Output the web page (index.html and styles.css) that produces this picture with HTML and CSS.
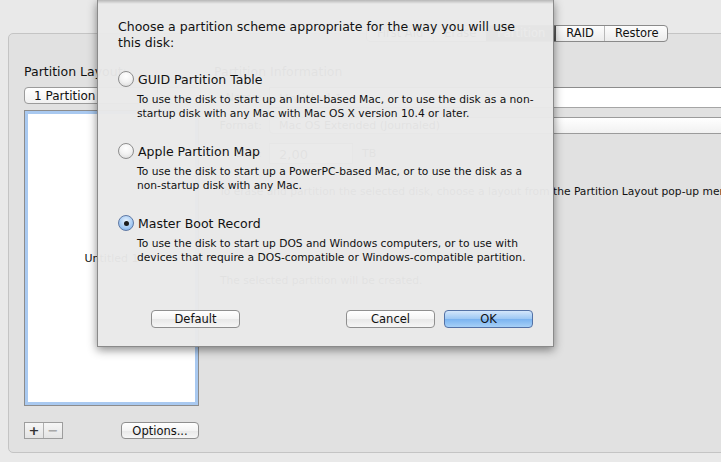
FILE: index.html
```html
<!DOCTYPE html>
<html lang="en">

<head>
  <meta charset="UTF-8" />
  <title>Disk Utility - Partition Options</title>
  <link rel="stylesheet" href="styles.css">
</head>

<body>

  <!-- window behind the sheet -->
  <div class="window">
    <div class="group">
      <div class="tabs">
        <span class="tab">First Aid</span>
        <span class="tab">Erase</span>
        <span class="tab selected">Partition</span>
        <span class="tab">RAID</span>
        <span class="tab">Restore</span>
      </div>

      <div class="layout-col">
        <div class="heading">Partition Layout:</div>
        <div class="popup">1 Partition</div>
        <div class="volume-list">
          <span class="volume-name">Untitled 1</span>
        </div>
        <div class="list-tools">
          <div class="plus-minus">
            <span class="pm">+</span>
            <span class="pm off">−</span>
          </div>
          <button class="btn options">Options...</button>
        </div>
      </div>

      <div class="info-col">
        <div class="heading">Partition Information</div>
        <div class="row">
          <span class="row-label">Name:</span>
          <span class="field wide">Untitled 1</span>
        </div>
        <div class="row">
          <span class="row-label">Format:</span>
          <span class="popup wide">Mac OS Extended (Journaled)</span>
        </div>
        <div class="row">
          <span class="row-label">Size:</span>
          <span class="field size">2,00</span>
          <span class="unit">TB</span>
        </div>
        <p class="hint">To erase and partition the selected disk, choose a layout from the Partition Layout pop-up menu, set options for each partition, and click Apply.</p>
        <p class="note">The selected partition will be created.</p>
      </div>
    </div>
  </div>

  <!-- options sheet -->
  <div class="sheet">
    <p class="intro">Choose a partition scheme appropriate for the way you will use<br>this disk:</p>

    <div class="scheme">
      <div class="scheme-title"><span class="radio"></span>GUID Partition Table</div>
      <p class="scheme-desc">To use the disk to start up an Intel-based Mac, or to use the disk as a non-<br>startup disk with any Mac with Mac OS X version 10.4 or later.</p>
    </div>

    <div class="scheme">
      <div class="scheme-title"><span class="radio"></span>Apple Partition Map</div>
      <p class="scheme-desc">To use the disk to start up a PowerPC-based Mac, or to use the disk as a<br>non-startup disk with any Mac.</p>
    </div>

    <div class="scheme">
      <div class="scheme-title"><span class="radio on"></span>Master Boot Record</div>
      <p class="scheme-desc">To use the disk to start up DOS and Windows computers, or to use with<br>devices that require a DOS-compatible or Windows-compatible partition.</p>
    </div>

    <div class="sheet-buttons">
      <button class="btn">Default</button>
      <button class="btn">Cancel</button>
      <button class="btn default">OK</button>
    </div>
  </div>

</body>

</html>
```

FILE: styles.css
```css
/* base */
html, body {
  margin: 0;
  height: 100%;
}

body {
  width: 721px;
  height: 462px;
  overflow: hidden;
  position: relative;
  background: #e9e9e9;
  color: #111;
  font-family: 'DejaVu Sans', 'Liberation Sans', sans-serif;
  font-size: 12.5px;
}

p {
  margin: 0;
}

/* background window */
.window {
  padding: 33px 0 0 8px;
}

.group {
  position: relative;
  width: 800px;
  height: 420px;
  border: 1px solid #c4c4c4;
  border-radius: 5px;
  background: #e1e1e1;
  display: flex;
  padding: 30px 0 0 15px;
  box-sizing: border-box;
}

/* segmented tabs on the group border */
.tabs {
  position: absolute;
  top: -9px;
  left: 357px;
  display: flex;
  height: 17px;
  border: 1px solid #8a8a8a;
  border-radius: 4px;
  background: linear-gradient(#fdfdfd, #ececec);
  overflow: hidden;
  box-sizing: border-box;
}

.tab {
  padding: 0 10px;
  line-height: 15px;
  font-size: 11.5px;
  border-left: 1px solid #b9b9b9;
}

.tab:last-child {
  padding-right: 8px;
}

.tab:first-child {
  border-left: none;
}

.tab.selected {
  background: linear-gradient(#707070, #4d4d4d);
  color: #fff;
  border-left-color: #555;
}

.tab.selected + .tab {
  border-left-color: #555;
}

.heading {
  height: 16px;
  line-height: 16px;
}

/* left column */
.layout-col {
  flex: none;
  width: 175px;
  display: flex;
  flex-direction: column;
}

.popup {
  height: 17px;
  margin-top: 7px;
  padding-left: 9px;
  line-height: 16px;
  border: 1px solid #9b9b9b;
  border-radius: 4px;
  background: linear-gradient(#ffffff, #f1f1f1);
  box-sizing: border-box;
  font-size: 12px;
}

.layout-col .popup {
  width: 177px;
}

.volume-list {
  height: 296px;
  margin-top: 6px;
  background: #fff;
  border: 1px solid #8c8c8c;
  box-shadow: inset 0 0 0 3px #a9c9f0;
  display: flex;
  align-items: center;
  justify-content: center;
  font-size: 11px;
  box-sizing: border-box;
}

.list-tools {
  margin-top: 16px;
  display: flex;
  align-items: center;
  justify-content: space-between;
}

.plus-minus {
  display: flex;
  border: 1px solid #9d9d9d;
  background: linear-gradient(#f6f6f6, #e4e4e4);
}

.pm {
  width: 18px;
  height: 15px;
  line-height: 15px;
  text-align: center;
  font-weight: bold;
  font-size: 13px;
  color: #333;
}

.pm.off {
  border-left: 1px solid #b0b0b0;
  color: #a8a8a8;
}

/* push buttons */
.btn {
  height: 18px;
  padding: 0;
  width: 89px;
  border: 1px solid #8f8f8f;
  border-radius: 4px;
  background: linear-gradient(#ffffff, #f4f4f4 50%, #e8e8e8 51%, #f6f6f6);
  font-family: inherit;
  font-size: 11.5px;
  color: #111;
  line-height: 16px;
}

.btn.options {
  width: 78px;
  height: 17px;
}

.btn.default {
  border-color: #5472a6;
  background: linear-gradient(#d3e6fb, #9cc7f4 50%, #7ab3f0 51%, #a6d0f7);
}

/* right column */
.info-col {
  margin-left: 15px;
  flex: 1;
}

.row {
  display: flex;
  align-items: center;
  margin-top: 7px;
}

.row + .row {
  margin-top: 9px;
}

.row-label {
  width: 48px;
  text-align: right;
  margin-right: 7px;
  font-size: 11px;
}

.field {
  height: 21px;
  line-height: 21px;
  padding-left: 9px;
  background: #fff;
  border: 1px solid #a5a5a5;
  border-top-color: #8c8c8c;
  box-sizing: border-box;
  font-size: 13px;
}

.row .popup {
  margin-top: 0;
  font-size: 11px;
}

.wide {
  width: 520px;
}

.size {
  width: 84px;
}

.unit {
  margin-left: 9px;
  font-size: 11px;
}

.hint {
  margin: 21px 0 0 5px;
  white-space: nowrap;
  font-size: 10.7px;
}

.note {
  margin: 76px 0 0 6px;
  font-size: 10.7px;
}

/* options sheet */
.sheet {
  position: absolute;
  left: 97px;
  top: 0;
  width: 457px;
  height: 347px;
  box-sizing: border-box;
  padding: 19px 0 18px 20px;
  display: flex;
  flex-direction: column;
  background:
    linear-gradient(rgba(0, 0, 0, 0.22), rgba(0, 0, 0, 0) 4px),
    rgba(233, 233, 233, 0.965);
  border: 1px solid #8a8a8a;
  border-top: none;
  box-shadow: 0 3px 9px rgba(0, 0, 0, 0.45);
}

.intro {
  line-height: 16px;
  white-space: nowrap;
}

.scheme {
  margin-top: 22px;
}

.scheme:first-of-type {
  margin-top: 20px;
}

.scheme-title {
  display: flex;
  align-items: center;
  height: 16px;
  white-space: nowrap;
}

.radio {
  width: 14px;
  height: 14px;
  margin-right: 4px;
  border-radius: 50%;
  border: 1px solid #8e8e8e;
  background: radial-gradient(circle at 50% 30%, #ffffff, #f2f2f2 50%, #d6d6d6);
  box-sizing: content-box;
  flex: none;
  display: flex;
  align-items: center;
  justify-content: center;
}

.radio.on {
  border-color: #5f79a5;
  background: radial-gradient(circle at 50% 35%, #e6f1fd, #a9cdf4 55%, #6fa6e6);
}

.radio.on::after {
  content: '';
  width: 5px;
  height: 5px;
  border-radius: 50%;
  background: #1b1b1b;
}

.scheme-desc {
  margin: 6px 0 0 19px;
  line-height: 14px;
  font-size: 10.7px;
  white-space: nowrap;
}

.sheet-buttons {
  margin-top: auto;
  display: flex;
  padding-left: 33px;
}

.sheet-buttons .btn:nth-child(2) {
  margin-left: auto;
}

.sheet-buttons .btn.default {
  margin: 0 20px 0 9px;
}
```
